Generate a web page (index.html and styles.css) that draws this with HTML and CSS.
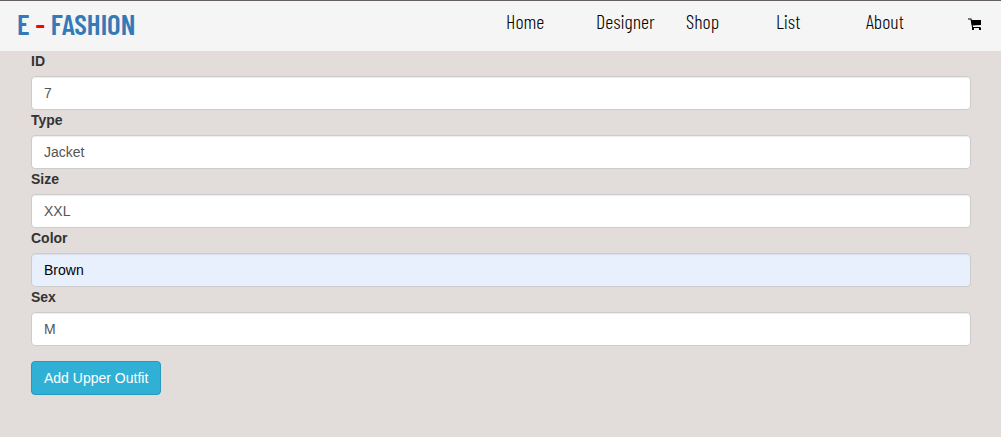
FILE: index.html
```html
<!DOCTYPE html>
<html lang="en">
<head>
  <meta charset="utf-8">
  <meta name="viewport" content="width=device-width, initial-scale=1">
  <title>E - Fashion</title>
  <link rel="stylesheet" href="styles.css">
</head>
<body>
  <header class="navbar">
    <a class="brand" href="#">E <span class="brand-dash">-</span> FASHION</a>
    <nav class="nav">
      <a class="nav-link" href="#">Home</a>
      <a class="nav-link" href="#">Designer</a>
      <a class="nav-link" href="#">Shop</a>
      <a class="nav-link" href="#">List</a>
      <a class="nav-link" href="#">About</a>
    </nav>
    <a class="cart" href="#" aria-label="Cart">
      <svg class="cart-icon" viewBox="0 0 14 13" aria-hidden="true">
        <path d="M0 1H3L4.6 9.5H12.6" fill="none" stroke="#000" stroke-width="1.1"/>
        <path d="M3 2H13V7L4 7.6Z"/>
        <rect x="4" y="10" width="2" height="2"/>
        <rect x="11" y="10" width="2" height="2"/>
      </svg>
    </a>
  </header>
  <main>
    <form class="outfit-form">
      <label class="label" for="id">ID</label>
      <input class="field" id="id" type="text" value="7">
      <label class="label" for="type">Type</label>
      <input class="field" id="type" type="text" value="Jacket">
      <label class="label" for="size">Size</label>
      <input class="field" id="size" type="text" value="XXL">
      <label class="label" for="color">Color</label>
      <input class="field field-filled" id="color" type="text" value="Brown">
      <label class="label" for="sex">Sex</label>
      <input class="field" id="sex" type="text" value="M">
      <button class="submit" type="button">Add Upper Outfit</button>
    </form>
  </main>
</body>
</html>
```

FILE: styles.css
```css
* {
  box-sizing: border-box;
}

body {
  margin: 0;
  background: #e2dcda;
  color: #333;
  font: 14px/20px "Liberation Sans", Arial, sans-serif;
}

.navbar {
  display: flex;
  align-items: center;
  height: 51px;
  padding: 0 19px 4px 17px;
  border-top: 1px solid #66605f;
  background: #f5f5f5;
  font-family: "Barlow Condensed", "Roboto Condensed", "Liberation Sans Narrow", "Liberation Sans", sans-serif;
}

.brand {
  color: #337ab7;
  font-size: 29px;
  font-weight: 600;
  line-height: 46px;
  text-decoration: none;
  white-space: nowrap;
}

.brand-dash {
  color: #f00;
}

.nav {
  display: flex;
  margin-left: auto;
}

.nav-link {
  width: 90px;
  color: #000;
  font-size: 20px;
  font-weight: 300;
  line-height: 26px;
  padding-bottom: 6px;
  text-decoration: none;
}

.cart {
  display: flex;
  margin-left: 12px;
}

.cart-icon {
  width: 14px;
  height: 13px;
}

.outfit-form {
  display: flex;
  flex-direction: column;
  align-items: flex-start;
  padding: 0 30px 42px 31px;
}

.label {
  margin-bottom: 5px;
  font-weight: 700;
}

.field {
  width: 100%;
  height: 34px;
  padding: 6px 12px;
  border: 1px solid #ccc;
  border-radius: 4px;
  background: #fff;
  box-shadow: inset 0 1px 1px rgba(0, 0, 0, 0.075);
  color: #555;
  font: inherit;
}

.field-filled {
  background: #e8f0fe;
  color: #000;
}

.submit {
  height: 34px;
  margin-top: 15px;
  padding: 6px 12px;
  border: 1px solid #269abc;
  border-radius: 4px;
  background: #31b0d5;
  color: #fff;
  font: inherit;
}
```
